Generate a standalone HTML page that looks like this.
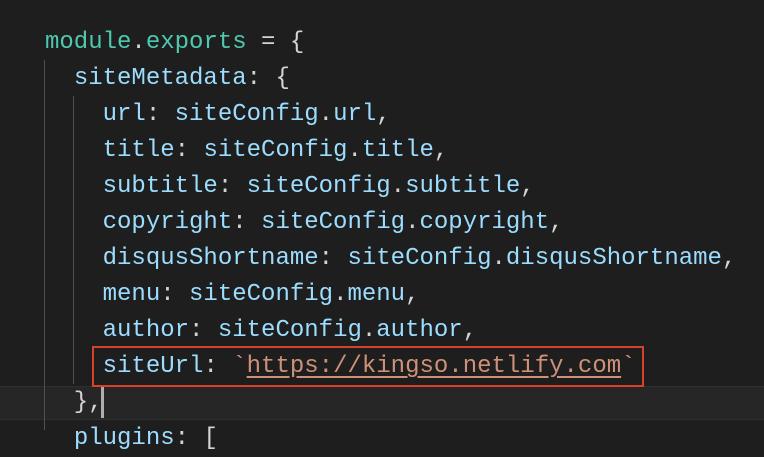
<!DOCTYPE html>
<html><head><style>
html,body{margin:0;padding:0;background:#1e1e1e;width:764px;height:430px;overflow:hidden}
.code{position:absolute;left:0;top:0;width:764px;font-family:"Liberation Mono",monospace;font-size:24px;color:#d4d4d4}
.l{position:absolute;left:45px;height:36px;line-height:36px;white-space:pre}
.t{color:#4ec9b0}.p{color:#9cdcfe}.s{color:#ce9178}.u{text-decoration:underline;text-underline-offset:4px}
.g{position:absolute;width:1px;background:#505050}
</style></head><body>
<div style="position:absolute;left:0;top:386px;width:764px;height:32px;background:#262626;border-top:1px solid #2e2e2e;border-bottom:1px solid #2e2e2e"></div>
<div class="g" style="left:44px;top:60px;height:370px"></div>
<div class="g" style="left:73px;top:96px;height:288px"></div>
<div class="code">
<div class="l" style="top:25px"><span class="t">module</span>.<span class="t">exports</span> = {</div>
<div class="l" style="top:61px">  <span class="p">siteMetadata</span>: {</div>
<div class="l" style="top:97px">    <span class="p">url</span>: <span class="p">siteConfig</span>.<span class="p">url</span>,</div>
<div class="l" style="top:133px">    <span class="p">title</span>: <span class="p">siteConfig</span>.<span class="p">title</span>,</div>
<div class="l" style="top:169px">    <span class="p">subtitle</span>: <span class="p">siteConfig</span>.<span class="p">subtitle</span>,</div>
<div class="l" style="top:205px">    <span class="p">copyright</span>: <span class="p">siteConfig</span>.<span class="p">copyright</span>,</div>
<div class="l" style="top:241px">    <span class="p">disqusShortname</span>: <span class="p">siteConfig</span>.<span class="p">disqusShortname</span>,</div>
<div class="l" style="top:277px">    <span class="p">menu</span>: <span class="p">siteConfig</span>.<span class="p">menu</span>,</div>
<div class="l" style="top:313px">    <span class="p">author</span>: <span class="p">siteConfig</span>.<span class="p">author</span>,</div>
<div class="l" style="top:349px">    <span class="p">siteUrl</span>: <span class="s">`<span class="u">https://kingso.netlify.com</span>`</span></div>
<div class="l" style="top:385px">  },</div>
<div class="l" style="top:421px">  <span class="p">plugins</span>: [</div>
</div>
<div style="position:absolute;left:101px;top:386px;width:3px;height:32px;background:#aeafad"></div>
<div style="position:absolute;left:92px;top:346px;width:548px;height:37px;border:2px solid #d9412f"></div>
</body></html>
